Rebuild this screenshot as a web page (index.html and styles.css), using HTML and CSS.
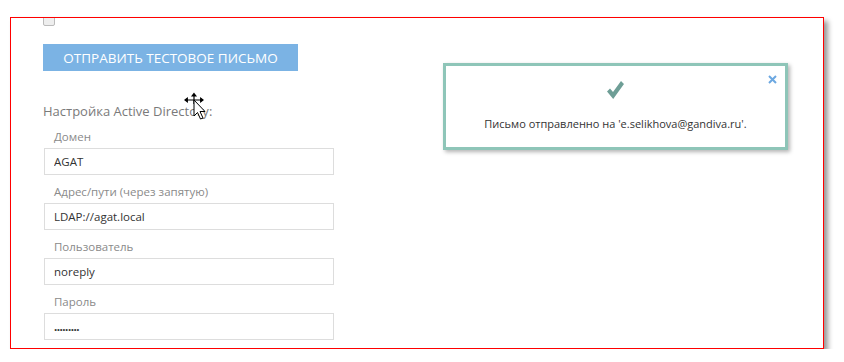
FILE: index.html
```html
<!DOCTYPE html>
<html lang="ru">
<head>
  <meta charset="UTF-8">
  <title>Настройки почты</title>
  <link rel="stylesheet" href="styles.css">
</head>
<body>
  <div class="frame">
    <div class="settings">
      <span class="checkbox"></span>
      <button class="btn-test">Отправить тестовое письмо</button>

      <h3 class="section-title">Настройка Active Directory:</h3>

      <div class="field">
        <label>Домен</label>
        <input type="text" value="AGAT">
      </div>
      <div class="field">
        <label>Адрес/пути (через запятую)</label>
        <input type="text" value="LDAP://agat.local">
      </div>
      <div class="field">
        <label>Пользователь</label>
        <input type="text" value="noreply">
      </div>
      <div class="field">
        <label>Пароль</label>
        <input type="text" class="pwd" value=".........">
      </div>
    </div>

    <div class="toast">
      <svg class="toast-close" width="9" height="9" viewBox="0 0 9 9">
        <path d="M1 1 L8 8 M8 1 L1 8" stroke="#6ca8e1" stroke-width="2"/>
      </svg>
      <svg class="toast-icon" width="17" height="18" viewBox="0 0 17 18">
        <polygon points="0,10.5 3,7.5 6,11 14,0 17,3 6.2,18" fill="#6e9e96"/>
      </svg>
      <div class="toast-text">Письмо отправленно на 'e.selikhova@gandiva.ru'.</div>
    </div>

    <svg class="cursor" width="26" height="30" viewBox="0 0 26 30">
      <!-- move cross -->
      <path d="M11 1.5 L12.8 3.8 L9.2 3.8 Z M11 3 L11 12 M4 8 L18 8 M2 8 L4.3 6.2 L4.3 9.8 Z M20 8 L17.7 6.2 L17.7 9.8 Z" stroke="#000" stroke-width="1.2" fill="#000"/>
      <!-- arrow -->
      <path d="M11 8 L11 24 L14.5 20.5 L17.5 27 L20 26 L17 19.5 L22 19.5 Z" fill="#fff" stroke="#000" stroke-width="1"/>
    </svg>
  </div>
</body>
</html>
```

FILE: styles.css
```css
body {
  margin: 0;
  background-color: #fff;
  font-family: "Open Sans", "Noto Sans", sans-serif;
}
.frame {
  position: relative;
  margin: 17px 0 0 10px;
  width: 812px;
  height: 330px;
  border: 1px solid #f00;
  box-shadow: 4px 4px 5px rgba(0, 0, 0, 0.4);
  overflow: hidden;
  background-color: #fff;
}
.settings {
  padding-left: 32px;
}
.checkbox {
  display: block;
  width: 10px;
  height: 11px;
  margin-top: -5px;
  border: 1px solid #bbb;
  border-radius: 2px;
  background-color: #eee;
}
.btn-test {
  display: block;
  margin-top: 18px;
  width: 255px;
  height: 27px;
  padding: 0;
  border: none;
  background-color: #7bb3e4;
  color: #fff;
  font-family: inherit;
  font-size: 13.5px;
  text-transform: uppercase;
}
.section-title {
  margin: 30px 0 7px;
  font-size: 13px;
  font-weight: normal;
  line-height: 20px;
  color: #7a7a7a;
}
.field {
  margin-bottom: 8px;
}
.field label {
  display: block;
  padding-left: 11px;
  font-size: 11.5px;
  line-height: 17px;
  color: #8a8a8a;
}
.field input {
  display: block;
  box-sizing: border-box;
  margin: 3px 0 0 1px;
  width: 290px;
  height: 27px;
  padding: 0 10px 0 9px;
  border: 1px solid #ddd;
  font-family: inherit;
  font-size: 11.5px;
  color: #333;
  outline: none;
}
.field input.pwd {
  font-weight: bold;
  letter-spacing: -0.5px;
}
.toast {
  position: absolute;
  left: 432px;
  top: 45px;
  box-sizing: border-box;
  width: 345px;
  height: 87px;
  border: 3px solid #8ec5b8;
  background-color: #fff;
  box-shadow: 2px 2px 4px rgba(0, 0, 0, 0.3);
  text-align: center;
}
.toast-icon {
  display: block;
  margin: 15px auto 0;
}
.toast-close {
  position: absolute;
  right: 8px;
  top: 9px;
}
.toast-text {
  margin-top: 17px;
  font-size: 11px;
  color: #333;
}
.cursor {
  position: absolute;
  left: 172px;
  top: 74px;
}
```
